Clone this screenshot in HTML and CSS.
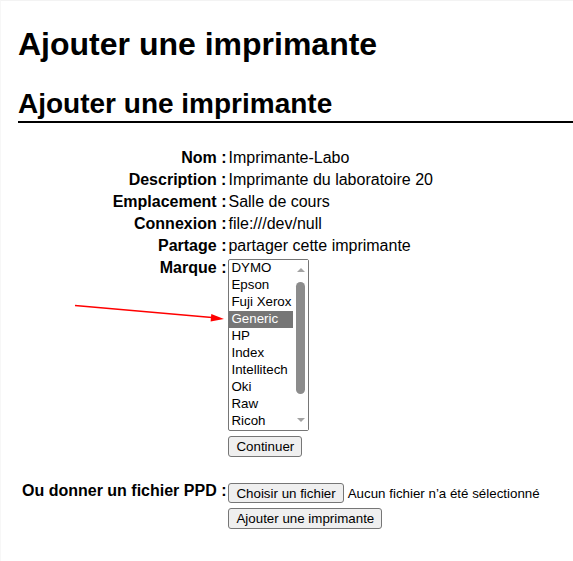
FILE: index.html
```html
<!DOCTYPE html>
<html lang="fr">
<head>
<meta charset="utf-8">
<title>Ajouter une imprimante</title>
<link rel="stylesheet" href="styles.css">
</head>
<body>
<h1 class="page-title">Ajouter une imprimante</h1>
<h2 class="section-title">Ajouter une imprimante</h2>

<div class="form-grid">
  <div class="label">Nom :</div>
  <div class="value">Imprimante-Labo</div>

  <div class="label">Description :</div>
  <div class="value">Imprimante du laboratoire 20</div>

  <div class="label">Emplacement :</div>
  <div class="value">Salle de cours</div>

  <div class="label">Connexion :</div>
  <div class="value">file:///dev/null</div>

  <div class="label">Partage :</div>
  <div class="value">partager cette imprimante</div>

  <div class="label">Marque :</div>
  <div class="value">
    <div class="listbox" role="listbox">
      <div class="options">
        <div class="option">DYMO</div>
        <div class="option">Epson</div>
        <div class="option">Fuji Xerox</div>
        <div class="option selected">Generic</div>
        <div class="option">HP</div>
        <div class="option">Index</div>
        <div class="option">Intellitech</div>
        <div class="option">Oki</div>
        <div class="option">Raw</div>
        <div class="option">Ricoh</div>
      </div>
      <div class="scrollbar">
        <div class="arrow arrow-up"></div>
        <div class="track"><div class="thumb"></div></div>
        <div class="arrow arrow-down"></div>
      </div>
    </div>
  </div>

  <div class="label"></div>
  <div class="value value-button">
    <button class="btn btn-continue" type="button">Continuer</button>
  </div>

  <div class="label label-ppd">Ou donner un fichier PPD :</div>
  <div class="value value-ppd">
    <div class="file-line">
      <button class="btn btn-file" type="button">Choisir un fichier</button>
      <span class="file-status">Aucun fichier n’a été sélectionné</span>
    </div>
    <button class="btn btn-add" type="button">Ajouter une imprimante</button>
  </div>
</div>

<svg class="annotation" width="573" height="561" viewBox="0 0 573 561" aria-hidden="true">
  <line x1="75" y1="305.5" x2="212" y2="317.5" stroke="#ff0000" stroke-width="1.6"/>
  <polygon points="224,319 211.3,314 210.6,321.5" fill="#ff0000"/>
</svg>
</body>
</html>
```

FILE: styles.css
```css
html {
  background: #ffffff;
}

body {
  margin: 0;
  padding: 0 0 0 17px;
  min-height: 560px;
  border-top: 1px solid #f3f3f3;
  border-left: 1px solid #f7f7f7;
  font-family: "Liberation Sans", Arial, sans-serif;
  font-size: 16px;
  color: #000000;
  background: #ffffff;
}

.page-title {
  margin: 25px 0 0;
  font-size: 32px;
  line-height: 37px;
  font-weight: bold;
}

.section-title {
  margin: 25px 0 0;
  padding-bottom: 1px;
  font-size: 28px;
  line-height: 32px;
  font-weight: bold;
  border-bottom: 2px solid #000000;
}

.form-grid {
  display: grid;
  grid-template-columns: max-content max-content;
  column-gap: 2px;
  align-items: start;
  margin: 24px 0 0 4px;
}

.label {
  padding: 2px 0;
  line-height: 18px;
  font-weight: bold;
  text-align: right;
}

.value {
  padding: 2px 0;
  line-height: 18px;
}

.listbox {
  display: flex;
  width: 81px;
  height: 172px;
  box-sizing: border-box;
  border: 1px solid #767676;
  border-radius: 2px;
  background: #ffffff;
}

.options {
  width: 64px;
  display: flex;
  flex-direction: column;
}

.option {
  height: 17px;
  box-sizing: border-box;
  line-height: 15px;
  padding: 0 0 2px 2px;
  font-size: 13.333px;
  white-space: nowrap;
  color: #000000;
}

.option.selected {
  background: #767676;
  color: #ffffff;
}

.scrollbar {
  width: 15px;
  display: flex;
  flex-direction: column;
  align-items: center;
  background: #ffffff;
}

.arrow {
  width: 0;
  height: 0;
  border-left: 4px solid transparent;
  border-right: 4px solid transparent;
}

.arrow-up {
  margin-top: 8px;
  border-bottom: 4px solid #a3a3a3;
}

.arrow-down {
  margin-bottom: 8px;
  border-top: 4px solid #a3a3a3;
}

.track {
  flex: 1;
  width: 100%;
  display: flex;
  justify-content: center;
  padding: 10px 0 16px;
  box-sizing: border-box;
}

.thumb {
  width: 9px;
  height: 112px;
  border-radius: 5px;
  background: #8c8c8c;
}

.value-button {
  padding-top: 3px;
}

.btn {
  display: block;
  margin: 0;
  box-sizing: border-box;
  padding: 0 7px;
  font-family: "Liberation Sans", Arial, sans-serif;
  font-size: 13.333px;
  line-height: 15px;
  color: #000000;
  background: #efefef;
  border: 1px solid #767676;
  border-radius: 3px;
}

.btn-continue {
  height: 21px;
}

.label-ppd {
  padding-top: 23px;
}

.value-ppd {
  padding-top: 24px;
  display: flex;
  flex-direction: column;
  align-items: flex-start;
  gap: 5px;
}

.file-line {
  display: flex;
  align-items: center;
  gap: 4px;
}

.btn-file {
  height: 20px;
}

.file-status {
  font-size: 13.333px;
  line-height: 15px;
}

.btn-add {
  height: 21px;
}

.annotation {
  position: absolute;
  left: 0;
  top: 0;
  pointer-events: none;
}
```
